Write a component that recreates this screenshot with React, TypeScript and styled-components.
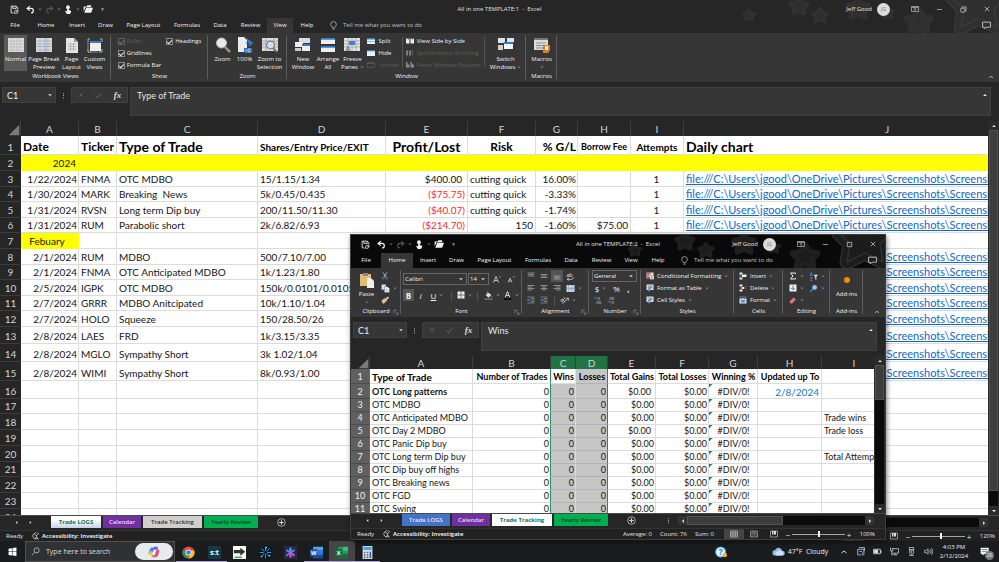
import React from "react";
import styled, { createGlobalStyle, css } from "styled-components";

const UI = `"Open Sans", "Noto Sans", sans-serif`;
const CELL = `Lato, "Open Sans", sans-serif`;

const GlobalStyle = createGlobalStyle`
  * { box-sizing: border-box; }
  body { margin: 0; background: #1b1c1e; font-family: ${UI}; overflow: hidden; }
  button, select, input, textarea { font: inherit; color: inherit; background: none; border: 0; padding: 0; margin: 0; border-radius: 0; }
  button { display: flex; align-items: center; justify-content: center; white-space: nowrap; }
  svg { display: block; flex: none; }
  a { color: #1268c4; }
`;

/* ---------- icons ---------- */

const ICONS: Record<string, React.ReactNode> = {
  save: <g fill="none" stroke="#e8e8e8" strokeWidth="1.6"><path d="M2 2h9l3 3v3M2 2v12h4M5 2v4h6V2" /><path d="M8 12a3 3 0 0 1 5-2l1-1v3h-3M14 13a3 3 0 0 1-5 1l-1 1v-2" /></g>,
  undo: <path d="M7 2 2 6l5 4M2 6h7a4 4 0 0 1 0 8" fill="none" stroke="#f0f0f0" strokeWidth="2.2" />,
  redo: <path d="m9 2 5 4-5 4M14 6H7a4 4 0 0 0 0 8" fill="none" stroke="#555" strokeWidth="1.8" />,
  touch: <g fill="#f0f0f0"><circle cx="7" cy="4" r="3.4" /><path d="M5.5 4h3v5l4 1v3l-2 3H5L2 11l1-1 2.5 1z" /></g>,
  folder: <g fill="#f2f2f2"><path d="M1 4h5l1-2h6v3H4L1 12z" /><path d="M5 6h11l-3 8H2z" /></g>,
  caret: <path d="M3 6h10l-5 5z" fill="#d0d0d0" />,
  chev: <path d="m3 6 5 4.5L13 6" fill="none" stroke="#d0d0d0" strokeWidth="2.2" />,
  qat: <path d="M4 3h8v2H4zM4 8h8l-4 4z" fill="#e0e0e0" />,
  bulb: <g fill="none" stroke="#c4c4c4" strokeWidth="1.3"><path d="M6 12c0-2-3-3-3-6a5 5 0 0 1 10 0c0 3-3 4-3 6zM6 14.5h4" /></g>,
  ribbonOpt: <g fill="none" stroke="#bdbdbd" strokeWidth="1.4"><path d="M1 3h14v10H1zM1 5h14M8 12V7M5.500 9 8 6.5 10.5 9" /></g>,
  min: <path d="M2 8h12" stroke="#cfcfcf" strokeWidth="1.5" />,
  max: <path d="M3 3h10v10H3z" fill="none" stroke="#e0e0e0" strokeWidth="1.5" />,
  restore: <path d="M2 5h9v9H2zM5 5V2h9v9h-3" fill="none" stroke="#ccc" strokeWidth="1.6" />,
  close: <path d="m2 2 12 12M14 2 2 14" stroke="#e6e6e6" strokeWidth="1.7" />,
  comment: <path d="M1 2h14v9H7l-3 3v-3H1z" fill="none" stroke="#d0d0d0" strokeWidth="1.5" />,
  collapse: <path d="m3 10 5-4 5 4" fill="none" stroke="#d8d8d8" strokeWidth="2" />,
  up: <path d="M3 10.5h10L8 5z" fill="#e6e6e6" />,
  down: <path d="M3 5.5h10L8 11z" fill="#e6e6e6" />,
  left: <path d="M10.5 3v10L5 8z" fill="#e6e6e6" />,
  right: <path d="M5.5 3v10L11 8z" fill="#e6e6e6" />,
  normal: <g><path d="M0 1h16v14H0z" fill="#dedede" /><path d="M0 4h16M0 7h16M0 10h16M0 13h16M3 1v14M6 1v14M9 1v14M12 1v14" stroke="#b2b2b2" strokeWidth=".6" /></g>,
  pageBreak: <g><path d="M0 1h16v14H0z" fill="#dcdcdc" /><path d="M0 4h16M0 7h16M4 1v14M8 1v14M12 1v14M0 13h16" stroke="#a0a6ad" strokeWidth=".6" /><path d="M0 9.500h16M10 1v14" stroke="#8fb4dc" strokeWidth="1" /></g>,
  pageLayout: <g><path d="M2 1h8l4 4v11H2z" fill="#e4e4e4" /><path d="M10 1v4h4" fill="#999" /><path d="M4 7h8M4 9.500h8M4 12h8M6.500 6v8M9.500 6v8" stroke="#a5a5a5" strokeWidth=".7" /></g>,
  custom: <g><path d="M1 2h2M1 2v3M13 2h2v3M1 12v3h3M15 12v3h-3" stroke="#aaa" fill="none" /><path d="M3 4h11v10H3z" fill="#eee" /><path d="M3 4h11v2H3z" fill="#2f7fd0" /><path d="M1 5v10h10" fill="none" stroke="#888" /></g>,
  zoom: <g><path d="m10 10 5 5" stroke="#9a9a9a" strokeWidth="2.4" /><circle cx="6.500" cy="6" r="5" fill="#e9e9e9" stroke="#b9b9b9" /></g>,
  hundred: <g><path d="M1 0h6l3 3v12H1z" fill="#ececec" /><path d="M10 3V1l4 4h-3z" fill="#2f7fd0" /><path d="M9 6h5M12 4l3 2-3 3" stroke="#2f7fd0" strokeWidth="1.5" fill="none" /><path d="M7 11h8v5H7z" fill="#2b6fba" /><path d="M9 12v3M11 12h2v3h-2z" stroke="#cfe2f5" strokeWidth=".7" fill="none" /></g>,
  zoomSel: <g><path d="M0 1h16v13H0z" fill="#dcdcdc" /><path d="M0 4h16M0 7h16M0 10h16M4 1v13M12 1v13" stroke="#999" strokeWidth=".7" /><path d="m11 11 4 4" stroke="#777" strokeWidth="2" /><circle cx="8.500" cy="8" r="4" fill="#cfdeed" stroke="#6d6d6d" /></g>,
  newWin: <g><path d="M4 1h11v5H4z" fill="#ddd" /><path d="M0 5h8v5H0z" fill="#f0f0f0" /><path d="M7 7h8v2H7z" fill="#2f7fd0" /><path d="M7 9h8v5H7z" fill="#f0f0f0" /><path d="M0 11h6v3H0z" fill="#ccc" /></g>,
  arrange: <g><path d="M1 1h14v6H1zM1 9h14v6H1z" fill="#efefef" /><path d="M1 1h14v1.800H1zM1 9h14v1.800H1z" fill="#2f7fd0" /></g>,
  freeze: <g><path d="M0 1h16v13H0z" fill="#e4e4e4" /><path d="M0 4h16M0 7h16M0 10h16M4 1v13M8 1v13M12 1v13" stroke="#9c9c9c" strokeWidth=".7" /><path d="M5 4h6v4H5z" fill="#3b82cf" /><path d="m1 14 3-6 3 6z" fill="#3a3a3a" opacity=".4" /></g>,
  split: <g><path d="M0 2h16v12H0z" fill="#efefef" /><path d="M0 2h16v3H0zM0 8h16v1H0z" fill="#2f7fd0" /></g>,
  hide: <g><path d="M0 2h16v12H0z" fill="#efefef" /><path d="M0 2h16v2.500H0z" fill="#2f7fd0" /></g>,
  unhide: <path d="M1 3h14v10H1zM1 5h14" fill="none" stroke="#5c5c5c" strokeWidth="1.5" />,
  side: <g fill="#ececec"><path d="M0 3h3l2 3V3h2v10H0zM9 3h3l2 3V3h2v10H9z" /></g>,
  sync: <g fill="#7d7d7d"><path d="M0 3h4v10H0zM6 3h4v10H6zM12 2h1v12h-1z" /></g>,
  reset: <g fill="#8a8a8a"><path d="M0 2h3v5h4v6H0zM9 2h3v5h4v6H9z" /></g>,
  switchWin: <g><path d="M0 1h7v5H0zM9 1h7v4H9z" fill="#e3e3e3" /><path d="M0 8h5v5H0z" fill="#d2d2d2" /><path d="M6 5h9v2H6z" fill="#2f7fd0" /><path d="M6 7h9v5H6z" fill="#f4f4f4" /></g>,
  macros: <g><path d="M0 1h14v12H0z" fill="#dcdcdc" /><path d="M0 1h14v2H0z" fill="#777" /><path d="M2 6h10M2 8.500h8M2 11h7" stroke="#8d8d8d" /><path d="M9 8h7v5l-2 3H9z" fill="#e07b28" /><path d="M11 9h3v4h-3z" fill="#f7efe6" /></g>,
  x: <path d="m3 3 10 10M13 3 3 13" stroke="#777" strokeWidth="1.5" />,
  check: <path d="m2 8 4 5 8-10" stroke="#777" strokeWidth="1.7" fill="none" />,
  dots: <path d="M7 2h2v2H7zM7 7h2v2H7zM7 12h2v2H7z" fill="#ccc" />,
  corner: <path d="M15 1v14H1z" fill="#7a7a7a" />,
  plus: <g fill="none" stroke="#d5d5d5" strokeWidth="1.3"><circle cx="8" cy="8" r="6.800" /><path d="M8 4v8M4 8h8" strokeWidth="2" /></g>,
  access: <g fill="none" stroke="#e6e6e6" strokeWidth="1.4"><path d="M9 2a6 6 0 1 0 3 10M5 5l4 2 4-3M9 7v3l4 5M9 10l-3 4M11 1l3 3" /></g>,
  launcher: <path d="M2 12V3h9M6 7l7 7M13 9v5H8" fill="none" stroke="#aaa" strokeWidth="1.3" />,
  paste: <g><path d="M1 2h11v12H1z" fill="#e3bd72" /><path d="M4 1h5v3H4z" fill="#888" /><path d="M8 6h4l3 3v7H8z" fill="#f0f0f0" /></g>,
  cut: <g fill="none" strokeWidth="1.4"><path d="m4 1 6 9M12 1 6 10" stroke="#ddd" /><circle cx="4.500" cy="12" r="2.200" stroke="#3c8ad8" /><circle cx="11.500" cy="12" r="2.200" stroke="#3c8ad8" /></g>,
  copy: <g><path d="M1 1h7l1 2v7H1z" fill="#ddd" /><path d="M6 5h6l3 3v7H6z" fill="#fff" stroke="#444" strokeWidth=".8" /><path d="M8 9h4M8 12h5" stroke="#2f7fd0" /></g>,
  brush: <g><path d="m9 5 5-4 2 3-5 4z" fill="#ddd" /><path d="m3 7 4-2 4 5-6 6-4-5z" fill="#e6bf7a" /><path d="m7 5 5 5" stroke="#fff" strokeWidth="1.5" /></g>,
  grow: <g><path d="m1 15 5-12 5 12M3 11h6" fill="none" stroke="#d6d6d6" strokeWidth="1.7" /><path d="M11 5h5l-2.500-4z" fill="#3c8ad8" /></g>,
  shrink: <g><path d="m2 15 4-9 4 9M3.500 12h5" fill="none" stroke="#d6d6d6" strokeWidth="1.5" /><path d="M11 2h5l-2.500 4z" fill="#3c8ad8" /></g>,
  borders: <g><path d="M1 1h14v14H1z" fill="#ededed" /><path d="M8 1v14M1 8h14" stroke="#4b4b4b" strokeWidth="1.4" /></g>,
  fill: <g><path d="m3 7 5-4 5 4-5 5z" fill="#e0e0e0" /><path d="M6 1v5" stroke="#ddd" /><path d="M13 8c2 2 2 4 1 4s-2-2-1-4" fill="#3c8ad8" /><path d="M1 13h14v3H1z" fill="#6a6a6a" /></g>,
  fontColor: <g><path d="m4 11 4-10 4 10M5.500 8h5" fill="none" stroke="#e0e0e0" strokeWidth="1.7" /><path d="M1 13h14v3H1z" fill="#0c0c0c" /></g>,
  alignTop: <path d="M1 2h14M3 5h10M1 8h14" stroke="#b0b0b0" strokeWidth="1.4" />,
  alignMid: <path d="M1 5h14M3 8h10M1 11h14" stroke="#b0b0b0" strokeWidth="1.4" />,
  alignBot: <path d="M1 8h14M3 11h10M1 14h14" stroke="#b0b0b0" strokeWidth="1.4" />,
  alignL: <path d="M1 3h14M1 6h9M1 9h14M1 12h9" stroke="#b0b0b0" strokeWidth="1.4" />,
  alignC: <path d="M1 3h14M4 6h8M1 9h14M4 12h8" stroke="#b0b0b0" strokeWidth="1.4" />,
  alignR: <path d="M1 3h14M6 6h9M1 9h14M6 12h9" stroke="#b0b0b0" strokeWidth="1.4" />,
  wrap: <g><text x="1" y="8" fontSize="9" fill="#eee" fontFamily="Open Sans">ab</text><path d="M2 13h8a3 3 0 0 0 3-4M5 11l-3 2 3 2" fill="none" stroke="#ddd" strokeWidth="1.3" /></g>,
  merge: <g><path d="M1 2h14v12H1z" fill="#e9e9e9" /><path d="M1 6h14v4H1z" fill="#7fb0e2" /><path d="M5 2v4M11 2v4M5 10v4M11 10v4" stroke="#777" /></g>,
  indentL: <g><path d="M1 2h14M8 5h7M8 8h7M8 11h7M1 14h14" stroke="#a8a8a8" strokeWidth="1.2" /><path d="M7 8H1M4 5 1 8l3 3" stroke="#3c8ad8" strokeWidth="1.8" fill="none" /></g>,
  indentR: <g><path d="M1 2h14M8 5h7M8 8h7M8 11h7M1 14h14" stroke="#a8a8a8" strokeWidth="1.2" /><path d="M0 8h7M4 5l3 3-3 3" stroke="#3c8ad8" strokeWidth="1.8" fill="none" /></g>,
  orient: <g stroke="#d6d6d6" strokeWidth="1.4" fill="none"><path d="M4 14 15 4M11 4h4v4" /><circle cx="3.500" cy="8" r="2" /><path d="m5 5 3 5M7 2l2 4" /></g>,
  decInc: <g fontSize="8" fill="#ddd" fontFamily="Open Sans"><text x="7" y="7">0</text><text x="3" y="15">.00</text><path d="M6 4H1M3 2 1 4l2 2" stroke="#3c8ad8" fill="none" strokeWidth="1.5" /></g>,
  decDec: <g fontSize="8" fill="#ddd" fontFamily="Open Sans"><text x="3" y="7">.00</text><text x="9" y="15">0</text><path d="M1 12h6M5 10l2 2-2 2" stroke="#3c8ad8" fill="none" strokeWidth="1.5" /></g>,
  cond: <g><path d="M1 1h14v13H1z" fill="#e3e3e3" /><path d="M1 1h8v4H1z" fill="#d9482f" /><path d="M1 6h5v3H1z" fill="#3c8ad8" /><path d="M1 10h7v4H1z" fill="#d9482f" /><path d="M8 7h8v8H8z" fill="#f4f4f4" stroke="#555" strokeWidth=".8" /><path d="M10 10h4M10 12.500h4" stroke="#444" /></g>,
  table: <g><path d="M1 1h14v11H1z" fill="#e9e9e9" /><path d="M1 4h14M1 8h14M5 1v11M10 1v11" stroke="#8b8b8b" /><path d="M6 5h9L7 15H4z" fill="#3c8ad8" opacity=".75" /><path d="m15 5-8 8" stroke="#eee" strokeWidth="1.5" /></g>,
  insert: <g><path d="M1 1h6v4H1zM1 11h6v4H1z" fill="#e6e6e6" /><path d="M6 5h9v5H6z" fill="#f2f2f2" /><path d="M6 7.500H1M3.500 5 1 7.500 3.500 10" stroke="#3c8ad8" strokeWidth="1.5" fill="none" /></g>,
  del: <g><path d="M1 1h6v4H1zM1 11h6v4H1zM5 6h5v4H5z" fill="#e6e6e6" /><path d="m10 4 5 6M15 4l-5 6" stroke="#d9482f" strokeWidth="1.5" /></g>,
  format: <g><path d="M1 1h14v2H1z" fill="#3c8ad8" /><path d="M1 5h14v10H1z" fill="#e9e9e9" /><path d="M5 5v10M11 5v10M1 9h14" stroke="#888" /><path d="M5 8h6v5H5z" fill="#3c8ad8" /></g>,
  sigma: <path d="M13 4V2H3l5 6-5 6h10v-2" fill="none" stroke="#ececec" strokeWidth="2" />,
  sortAz: <g><path d="m2 7 2-6 2 6" stroke="#4c8fe0" fill="none" strokeWidth="1.5" /><path d="M2 10h4l-4 5h4" stroke="#a05ac0" fill="none" strokeWidth="1.5" /><path d="M8 5h8l-3 4v5l-2-1V9z" fill="#ddd" /></g>,
  fillDown: <g><path d="M1 1h14v14H1z" fill="#eee" /><path d="M8 3v8M4.500 8 8 11.500 11.500 8" stroke="#2f7fd0" strokeWidth="2" fill="none" /></g>,
  find: <g><path d="m7 9-5 5" stroke="#3c8ad8" strokeWidth="2.4" /><circle cx="10" cy="6" r="4.300" fill="#9cc8f2" stroke="#3c8ad8" /></g>,
  eraser: <path d="m1 11 8-8 5 4-8 8H3z" fill="#e0738c" />,
  gridView: <path d="M1 2h14v12H1zM1 6h14M1 10h14M5.500 2v12M10.500 2v12" stroke="#c8c8c8" fill="none" strokeWidth="1.3" />,
  pageView: <path d="M1 2h14v12H1zM4 4h8v10M4 4v10M6 7h4M6 10h4" stroke="#bdbdbd" fill="none" strokeWidth="1.2" />,
  breakView: <g><path d="M1 2h14v12H1z" stroke="#c8c8c8" fill="none" strokeWidth="1.3" /><path d="M4 2h3v7H4zM8 2h4v7H8z" fill="#ddd" /></g>,
  windows: <path d="m1 3 6-1v6H1zM8 1.800 15 1v7H8zM1 9h6v6l-6-1zM8 9h7v7l-7-1z" fill="#fff" />,
  search: <g fill="none" stroke="#cfcfcf" strokeWidth="1.3"><circle cx="10" cy="6" r="4.500" /><path d="m6.500 9.500-5 5" /></g>,
  copilot: <g><path d="M5 2h5l-3 9H2C0 11 1 8 2 6s1-4 3-4" fill="#2d8fe0" /><path d="M8 1h3c3 0 2 3 2 4H8z" fill="#7a4ee0" /><path d="M1 7h5l-1 5c-4 0-5-2-4-5" fill="#f2c230" /><path d="M11 5h3c2 0 1 3 0 6s-2 4-4 4H6l3-3z" fill="#e0527c" /><path d="M5 12h4l-2 3c-2 0-3-1-2-3" fill="#f08a38" /><path d="M8 5h3l-3 6H5z" fill="#fff" /></g>,
  chrome: <g><circle cx="8" cy="8" r="7.500" fill="#dd4b3e" /><path d="M1.500 4.300 8 15.500A7.500 7.500 0 0 1 1.500 4.300" fill="#1fa05a" /><path d="M15 5.500A7.500 7.500 0 0 1 8 15.500l3.500-7V5.500z" fill="#fbc116" /><circle cx="8" cy="8" r="3.700" fill="#fff" /><circle cx="8" cy="8" r="2.800" fill="#3f7fe8" /></g>,
  st: <g><path d="M0 0h16v16H0z" fill="#173646" /><text x="8" y="11.500" textAnchor="middle" fontSize="9" fontWeight="700" fill="#fff" fontFamily="Open Sans">s:t</text></g>,
  arrowApp: <g><path d="M0 0h16v16H0z" fill="#f5f8f5" /><path d="M1 5h8V2l6 5-6 5V9H1z" fill="#333" /><path d="M2 13h9v2H2z" fill="#34b25c" /></g>,
  burst: <g><path d="M0 0h16v16H0z" fill="#071c2a" /><g stroke="#38a9df" strokeWidth="1.1"><path d="M8 1v5M8 10v5M1 8h5M10 8h5M3 3l3.500 3.500M9.500 9.500 13 13M13 3 9.500 6.500M6.500 9.500 3 13" /></g><circle cx="9" cy="2" r="1" fill="#9de" /><circle cx="3" cy="13" r="1" fill="#9de" /><circle cx="13" cy="12" r="1" fill="#9de" /></g>,
  asterisk: <g><path d="M0 0h16v16H0z" fill="#2b2745" /><g strokeWidth="2.5"><path d="M8 8V2" stroke="#3bb7e8" /><path d="m8 8 5-3" stroke="#7b6cf0" /><path d="m8 8 5 4" stroke="#b65be6" /><path d="M8 8v6" stroke="#e460c0" /><path d="m8 8-5 4" stroke="#8d62ef" /><path d="M8 8 3 5" stroke="#4d8df2" /></g></g>,
  word: <g><path d="M4 1h12v14H4z" fill="#2f78d4" /><path d="M4 1h12v4H4z" fill="#4ea5ee" /><path d="M4 11h12v4H4z" fill="#1b4a9c" /><path d="M0 4h9v9H0z" fill="#1c55ae" /><text x="4.500" y="11" textAnchor="middle" fontSize="7" fontWeight="700" fill="#fff" fontFamily="Open Sans">W</text></g>,
  excel: <g><path d="M4 1h12v14H4z" fill="#219a5b" /><path d="M10 1h6v5h-6z" fill="#34c481" /><path d="M4 10h12v5H4z" fill="#176a3c" /><path d="M0 4h9v9H0z" fill="#12703d" /><text x="4.500" y="11" textAnchor="middle" fontSize="7" fontWeight="700" fill="#fff" fontFamily="Open Sans">X</text></g>,
  calc: <g><path d="M2 0h12v16H2z" fill="#dfe5ea" /><path d="M3 1h10v4H3z" fill="#3fa8e6" /><path d="M3.500 7h2v2h-2zM7 7h2v2H7zM3.500 10h2v2h-2zM7 10h2v2H7zM3.500 13h2v2h-2zM7 13h2v2H7z" fill="#59666f" /><path d="M10.500 7h2v8h-2z" fill="#235f92" /></g>,
  help: <g><circle cx="7.500" cy="8" r="7.500" fill="#2a9bd8" /><circle cx="7.500" cy="8" r="6" fill="#e9f6fd" /><text x="7.500" y="12.500" textAnchor="middle" fontSize="12" fontWeight="700" fill="#1d7fbd" fontFamily="Open Sans">?</text><circle cx="13" cy="12" r="3" fill="#f5b52c" /></g>,
  cloud: <g><path d="M4 13a3.500 3.500 0 0 1 0-7 4.500 4.500 0 0 1 8.500 1A3 3 0 0 1 13 13z" fill="#8fb6ee" /><path d="M5 13a3 3 0 0 1 1-5 4 4 0 0 1 6.500 0A3 3 0 0 1 13 13z" fill="#cfe0fa" /></g>,
  meet: <g fill="none" stroke="#ddd" strokeWidth="1.3"><path d="M3 4h11v7M3 4v10h6M5 1h10v6M6 8h5" /><circle cx="12.500" cy="12.500" r="3" fill="#2f86e0" stroke="none" /></g>,
  battery: <g><path d="M1 4h12v8H1z" fill="none" stroke="#ddd" strokeWidth="1.4" /><path d="M13 6h2v4h-2zM2 5h7v6H2z" fill="#ddd" /></g>,
  monitor: <path d="M4 3h11v8H4M1 1v6h4V2M6 14h7M9 11v3M3 7v7h2" fill="none" stroke="#ddd" strokeWidth="1.3" />,
  usb: <g fill="none" stroke="#ddd" strokeWidth="1.3"><path d="M4 1h8v4H4zM4 15h8" /><circle cx="8" cy="9" r="4" /><path d="M8 7v4" /></g>,
  volume: <g fill="none" stroke="#ddd" strokeWidth="1.2"><path d="M1 6h3l3-3v10l-3-3H1z" /><path d="M9 6c1 1 1 3 0 4M11 4c2 2 2 6 0 8M13 2c3 3 3 9 0 12" /></g>,
  note: <g><path d="M1 1h13v10H7l-3 3v-3H1z" fill="#f0f0f0" /><path d="M3 4h9M3 7h9" stroke="#555" /></g>,
};

const Icon = ({ n, s = 8 }: { n: string; s?: number }) => (
  <svg viewBox="0 0 16 16" width={s} height={s} aria-hidden="true">{ICONS[n]}</svg>
);

const STAR = "M0-8 3-3 9-2 5 2 6 8 0 5-6 8-5 2-9-2-3-3Z";
const StarLayer = styled.svg`
  position: absolute; right: 0; top: 0; height: 33px; width: 260px; z-index: 0;
`;
const Stars = ({ fill, line }: { fill: string; line: string }) => (
  <StarLayer viewBox="0 0 260 33" aria-hidden="true">
    {[[10, 15, 0.6], [60, 6, 0.9], [81, 15, 0.75], [119, 8, 1.1], [149, 12, 0.6], [180, 21, 1.3], [240, 3, 3]].map(([x, y, k]) => (
      <g key={x} transform={`translate(${x} ${y}) scale(${k})`} strokeLinejoin="round">
        <path d={STAR} fill={line} stroke={line} strokeWidth="5" />
        <path d={STAR} fill={fill} stroke={fill} strokeWidth="4" />
        <path d={STAR} fill="none" stroke={line} strokeWidth=".6" />
      </g>
    ))}
  </StarLayer>
);

/* ---------- window chrome ---------- */

const Desktop = styled.div`
  position: relative; height: 100vh; display: flex; flex-direction: column;
  overflow: hidden; color: #f2f2f2; font-size: 6px; line-height: 9px;
`;
const MainWindow = styled.section`flex: 1; min-height: 0; display: flex; flex-direction: column; background: #262626;`;
const FloatWindow = styled.section`
  position: absolute; left: 351px; top: 235px; width: 534px; height: 304px;
  display: flex; flex-direction: column; background: #262626;
  box-shadow: 0 0 0 1px #3d3d3d, 1px 2px 5px 1px rgba(0, 0, 0, .5);
`;
const Head = styled.header<{ $bg: string }>`position: relative; background: ${p => p.$bg}; flex: none;`;
const TitleBar = styled.div`
  position: relative; z-index: 1; height: 18px; display: grid; grid-template-columns: 1fr auto 1fr; align-items: center;
`;
const QuickBar = styled.div`display: flex; align-items: center; padding-left: 10px; gap: 3px;`;
const QuickButton = styled.button<{ $gap?: number }>`margin-right: ${p => p.$gap || 0}px; height: 12px;`;
const Title = styled.h1`margin: 0; font-size: 6px; font-weight: 400; color: #e0e0e0; white-space: pre;`;
const Account = styled.div`display: flex; align-items: center; justify-content: flex-end; color: #e4e4e4;`;
const Avatar = styled.span`
  width: 13px; height: 13px; border-radius: 50%; background: #dcdcdc; color: #777; margin: 0 13px 0 5px;
  display: grid; place-items: center; font-size: 5px;
`;
const WinButton = styled.button`width: 24px; height: 14px;`;
const TabRow = styled.nav`position: relative; z-index: 1; display: flex; height: 15px; align-items: stretch;`;
const RibbonTabs = styled.div`display: grid; grid-template-columns: 30px 32px 30px 27px 49px 38px 28px 33px 26px 28px;`;
const RibbonTab = styled.button<{ $on?: boolean }>`background: ${p => (p.$on ? "#363636" : "transparent")};`;
const TellMe = styled.button`gap: 5px; margin-left: 8px; color: #c4c4c4;`;
const CommentButton = styled.button`margin-left: auto; width: 24px; margin-right: 1px;`;

const RibbonBar = styled.div`flex: none; display: flex; height: 49px; background: #363636;`;
const GroupBox = styled.div<{ $w: number }>`
  width: ${p => p.$w}px; flex: none; display: flex; flex-direction: column; padding: 2px 0 1px;
  background: linear-gradient(#5c5c5c, #5c5c5c) right 2px / 1px 44px no-repeat;
`;
const GroupBody = styled.div`flex: 1; display: flex; justify-content: center;`;
const GroupLabel = styled.div`
  height: 9px; text-align: center; white-space: nowrap; display: grid; align-items: center;
  grid-template-columns: minmax(0, 8px) 1fr minmax(0, 8px);
`;
const Group = ({ w, label, launcher, children }: { w: number; label: string; launcher?: boolean; children: React.ReactNode }) => (
  <GroupBox $w={w}>
    <GroupBody>{children}</GroupBody>
    <GroupLabel><i /><span>{label}</span>{launcher && <Icon n="launcher" s={6} />}</GroupLabel>
  </GroupBox>
);
const Big = styled.button<{ $w: number; $on?: boolean }>`
  width: ${p => p.$w}px; height: 36px; flex-direction: column; justify-content: flex-start; padding-top: 2px; gap: 2px;
  line-height: 8px; background: ${p => (p.$on ? "#5a5a5a" : "transparent")}; white-space: pre; text-align: center;
`;
const CollapseButton = styled.button`margin-left: auto; align-self: flex-end; width: 14px; height: 10px; margin-right: 1px;`;
const Stack = styled.div<{ $ml?: number }>`display: flex; flex-direction: column; align-items: flex-start; margin-left: ${p => p.$ml || 0}px;`;
const Small = styled.button<{ $off?: boolean }>`height: 12px; gap: 3px; color: ${p => (p.$off ? "#5e5e5e" : "inherit")};`;
const Divider = styled.i<{ $h?: number }>`width: 1px; height: ${p => p.$h || 30}px; background: #555; margin: 2px 3px 0;`;
const CheckLabel = styled.label<{ $off?: boolean }>`display: flex; align-items: center; height: 12px; gap: 2px; color: ${p => (p.$off ? "#5e5e5e" : "inherit")};`;
const CheckBox = styled.input`
  appearance: none; width: 7px; height: 7px; border: 1px solid #8b8b8b; display: grid; place-items: center;
  &:disabled { border-color: #606060; }
  &:checked::after { content: ""; width: 4px; height: 2px; border: solid #e6e6e6; border-width: 0 0 1px 1px; transform: rotate(-45deg); }
  &:disabled::after { opacity: .3; }
`;
const Check = ({ label, off }: { label: string; off?: boolean }) => (
  <CheckLabel $off={off}><CheckBox type="checkbox" defaultChecked disabled={off} />{label}</CheckLabel>
);

const FormulaRow = styled.div`flex: none; display: flex; align-items: flex-start; padding: 5px 8px 5px 2px; height: 39px; font-family: ${CELL}; font-size: 9px;`;
const SelectWrap = styled.span<{ $w: number; $h: number; $edge?: boolean }>`
  display: grid; align-items: center; width: ${p => p.$w}px; height: ${p => p.$h}px; background: #363636;
  border: 1px solid ${p => (p.$edge ? "#666" : "#404040")};
  > * { grid-area: 1 / 1; }
  > svg { justify-self: end; margin-right: 2px; pointer-events: none; }
`;
const Select = styled.select<{ $pad?: number }>`appearance: none; width: 100%; height: 100%; padding-left: ${p => p.$pad || 1}px; outline: 0;`;
const Combo = ({ w, h, value, label, edge, pad }: { w: number; h: number; value: string; label: string; edge?: boolean; pad?: number }) => (
  <SelectWrap $w={w} $h={h} $edge={edge}>
    <Select $pad={pad} aria-label={label} defaultValue={value}><option>{value}</option></Select>
    <Icon n="caret" s={6} />
  </SelectWrap>
);
const FxBar = styled.div`display: flex; background: #363636; width: 57px; height: 16px; justify-content: space-around; border: 1px solid #404040; margin-right: 2px;`;
const FxGlyph = styled.em`font-family: "Liberation Serif", serif; font-weight: 700; font-size: 9px; color: #dcdcdc;`;
const FormulaInput = styled.textarea`
  flex: 1; height: 29px; background: #363636; border: 1px solid #404040; resize: none; padding: 3px 6px; outline: 0; color: #e6e6e6;
  overflow: hidden;
`;
const ExpandButton = styled.button`width: 12px; height: 16px; margin-left: -12px;`;
const DotsCell = styled.span`width: 15px; height: 16px; display: grid; place-items: center;`;

function WindowHead({ title, active, dark, full }: { title: string; active: string; dark?: boolean; full?: boolean }) {
  const tabs = ["File", "Home", "Insert", "Draw", "Page Layout", "Formulas", "Data", "Review", "View", "Help"];
  return (
    <Head $bg={dark ? "#090909" : "#262626"}>
      <Stars fill={dark ? "#1c1c1c" : "#2f2f2f"} line={dark ? "#2d2d2d" : "#383838"} />
      <TitleBar>
        <QuickBar>
          <QuickButton $gap={4} aria-label="Save"><Icon n="save" s={9} /></QuickButton>
          <QuickButton aria-label="Undo"><Icon n="undo" s={9} /></QuickButton><Icon n="chev" s={4} />
          <QuickButton aria-label="Redo"><Icon n="redo" s={9} /></QuickButton><Icon n="chev" s={4} />
          <QuickButton aria-label="Touch mode"><Icon n="touch" s={9} /></QuickButton><Icon n="chev" s={4} />
          <QuickButton $gap={4} aria-label="Open"><Icon n="folder" s={10} /></QuickButton>
          <QuickButton aria-label="Customize toolbar"><Icon n="qat" s={5} /></QuickButton>
        </QuickBar>
        <Title>{title}</Title>
        <Account>
          <span>Jeff Good</span><Avatar>JG</Avatar>
          <WinButton aria-label="Ribbon display options"><Icon n="ribbonOpt" s={8} /></WinButton>
          <WinButton aria-label="Minimize"><Icon n="min" s={7} /></WinButton>
          <WinButton aria-label="Resize"><Icon n={full ? "restore" : "max"} s={7} /></WinButton>
          <WinButton aria-label="Close"><Icon n="close" s={6} /></WinButton>
        </Account>
      </TitleBar>
      <TabRow>
        <RibbonTabs>{tabs.map(t => <RibbonTab key={t} $on={t === active}>{t}</RibbonTab>)}</RibbonTabs>
        <TellMe><Icon n="bulb" s={9} />Tell me what you want to do</TellMe>
        <CommentButton aria-label="Comments"><Icon n="comment" s={9} /></CommentButton>
      </TabRow>
    </Head>
  );
}

function FormulaBar({ value }: { value: string }) {
  return (
    <FormulaRow>
      <Combo w={54} h={16} value="C1" label="Name box" pad={4} />
      <DotsCell><Icon n="dots" s={7} /></DotsCell>
      <FxBar>
        <button aria-label="Cancel"><Icon n="x" s={6} /></button>
        <button aria-label="Enter"><Icon n="check" s={7} /></button>
        <button aria-label="Insert function"><FxGlyph>fx</FxGlyph></button>
      </FxBar>
      <FormulaInput aria-label="Formula" defaultValue={value} />
      <ExpandButton aria-label="Expand formula bar"><Icon n="up" s={6} /></ExpandButton>
    </FormulaRow>
  );
}

/* ---------- sheets ---------- */

const SheetArea = styled.div`flex: 1; min-height: 0; display: flex; overflow: hidden;`;
const SheetClip = styled.div`flex: 1; min-width: 0; overflow: hidden; background: #fff;`;
const Sheet = styled.table<{ $size: number; $line: number; $over: number }>`
  width: calc(100% + ${p => p.$over}px); table-layout: fixed; border-collapse: separate; border-spacing: 0;
  font-family: ${CELL}; font-size: ${p => p.$size}px; line-height: ${p => p.$line}px; color: #151515;
`;
const HeadRow = styled.tr<{ $h: number }>`height: ${p => p.$h}px;`;
const ColHead = styled.th<{ $sel?: boolean }>`
  padding: 0; font-weight: 400; text-align: center; vertical-align: bottom; color: #d4d4d4; font-size: 10px;
  background: ${p => (p.$sel ? "#217346" : "#262626")}; border-right: 1px solid #3c3c3c;
  > svg { margin-left: auto; }
`;
const RowHead = styled.th<{ $sel?: boolean }>`
  padding: 0; font-weight: 400; text-align: center; vertical-align: bottom; color: ${p => (p.$sel ? "#f0f0f0" : "#d4d4d4")}; overflow: hidden;
  background: ${p => (p.$sel ? "#5f5f5f" : "#262626")}; border-bottom: 1px solid ${p => (p.$sel ? "#4c4c4c" : "#3c3c3c")};
  ${p => p.$sel && css`border-right: 1px solid #2b8a57;`}
`;
const Row = styled.tr<{ $h: number }>`height: ${p => p.$h}px;`;
type CellProps = { $align?: string; $bold?: boolean; $size?: number; $color?: string; $fill?: string; $pad?: number; $edge?: boolean; $flag?: boolean };
const Cell = styled.td<CellProps>`
  padding: 0 ${p => p.$pad ?? 2}px 0 ${p => (p.$align === "center" ? 1 : 2)}px; overflow: hidden; white-space: pre; vertical-align: bottom;
  text-align: ${p => p.$align || "left"}; font-weight: ${p => (p.$bold ? 700 : 400)};
  ${p => p.$size && css`font-size: ${p.$size}px;`}
  color: ${p => p.$color || "inherit"}; background: ${p => p.$fill || "#fff"};
  border-right: 1px solid ${p => (p.$edge ? "#2b8a57" : p.$fill === "#ff0" ? "#ff0" : "#dcdcdc")};
  border-bottom: 1px solid ${p => (p.$fill === "#ff0" ? "#ff0" : p.$fill ? "#b2b2b2" : "#dcdcdc")};
  ${p => p.$flag && css`background: linear-gradient(135deg, #1c8a3c 2px, transparent 3px) #fff;`}
`;
const VScroll = styled.div`
  flex: none; width: 11px; background: #2b2b2b; display: flex; flex-direction: column; align-items: stretch;
  > button { height: 9px; }
`;
const VTrack = styled.div`flex: 1; background: #0b0b0b; margin: 0 1px;`;
const VThumb = styled.div<{ $p: number }>`height: ${p => p.$p}%; background: #3d3d3d; border: 1px solid #525252;`;

const LINK = "file:///C:\\Users\\jgood\\OneDrive\\Pictures\\Screenshots\\Screenshot";
const RED = "#ff2a1f";
const LOG_WIDTHS = [21, 58, 38, 141, 128, 82, 68, 42, 53, 53];
const LOG_HEIGHTS = [19, 16, 16, 15, 16, 15, 16, 16, 15, 16, 15, 16, 17, 18, 19, 18, 15, 16, 16, 16, 15, 16, 16, 16];
const LOG_HEAD: [string, number, string][] = [
  ["Date", 12, "left"], ["Ticker", 12, "left"], ["Type of Trade", 14, "left"], ["Shares/Entry Price/EXIT", 10, "left"],
  ["Profit/Lost", 14, "center"], ["Risk", 12, "center"], ["% G/L", 12, "right"], ["Borrow Fee", 9, "center"], ["Attempts", 10, "center"], ["Daily chart", 14, "left"],
];
const LOGS: Record<number, string[]> = {
  3: ["1/22/2024", "FNMA", "OTC MDBO", "15/1.15/1.34", "$400.00", "cutting quick", "16.00%", "", "1"],
  4: ["1/30/2024", "MARK", "Breaking  News", "5k/0.45/0.435", "($75.75)", "cutting quick", "-3.33%", "", "1"],
  5: ["1/31/2024", "RVSN", "Long term Dip buy", "200/11.50/11.30", "($40.07)", "cutting quick", "-1.74%", "", "1"],
  6: ["1/31/2024", "RUM", "Parabolic short", "2k/6.82/6.93", "($214.70)", "150", "-1.60%", "$75.00", "1"],
  8: ["2/1/2024", "RUM", "MDBO", "500/7.10/7.00"],
  9: ["2/1/2024", "FNMA", "OTC Anticipated MDBO", "1k/1.23/1.80"],
  10: ["2/5/2024", "IGPK", "OTC MDBO", "150k/0.0101/0.0105"],
  11: ["2/7/2024", "GRRR", "MDBO Anitcipated", "10k/1.10/1.04"],
  12: ["2/7/2024", "HOLO", "Squeeze", "150/28.50/26"],
  13: ["2/8/2024", "LAES", "FRD", "1k/3.15/3.35"],
  14: ["2/8/2024", "MGLO", "Sympathy Short", "3k 1.02/1.04"],
  15: ["2/8/2024", "WIMI", "Sympathy Short", "8k/0.93/1.00"],
};
const LOG_ALIGN = ["right", "left", "left", "left", "right", "left", "right", "right", "center"];

function LogSheet() {
  return (
    <Sheet $size={10} $line={14} $over={103}>
      <colgroup>{LOG_WIDTHS.map((w, i) => <col key={i} width={w} />)}<col /></colgroup>
      <thead><HeadRow $h={15}>
        <ColHead aria-label="Select all"><Icon n="corner" s={12} /></ColHead>
        {"ABCDEFGHIJ".split("").map(c => <ColHead key={c}>{c}</ColHead>)}
      </HeadRow></thead>
      <tbody>
        {LOG_HEIGHTS.map((h, i) => {
          const n = i + 1;
          const data = LOGS[n] || [];
          return (
            <Row key={n} $h={h}>
              <RowHead>{n}</RowHead>
              {n === 1 && LOG_HEAD.map(([t, s, a]) => <Cell key={t} $bold $size={s} $align={a} $color="#000" $pad={1}>{t}</Cell>)}
              {n === 2 && LOG_HEAD.map(([t], c) => <Cell key={t} $fill="#ff0" $align="right">{c === 0 ? "2024" : ""}</Cell>)}
              {n === 7 && <><Cell $fill="#ff0" $align="center" $pad={6}>Febuary</Cell>{LOG_HEAD.slice(1).map(([t]) => <Cell key={t} />)}</>}
              {n > 2 && n !== 7 && LOG_ALIGN.map((a, c) => {
                const v = data[c] || "";
                return (
                  <Cell key={c} $align={v === "150" ? "right" : a} $color={v.startsWith("($") ? RED : undefined} $pad={v === "$400.00" ? 5 : c === 6 || c === 0 ? 1 : 2}>{v}</Cell>
                );
              })}
              {n > 2 && n !== 7 && <Cell $size={11}>{n < 16 && <a href="#chart">{LINK}</a>}</Cell>}
            </Row>
          );
        })}
      </tbody>
    </Sheet>
  );
}

const TRACK_WIDTHS = [19, 103, 78, 25, 32, 48, 53, 49, 64];
const TRACK_HEAD = ["Type of Trade", "Number of Trades", "Wins", "Losses", "Total Gains", "Total Losses", "Winning %", "Updated up To", ""];
const TRACK_NAMES = ["OTC Long patterns", "OTC MDBO", "OTC Anticipated MDBO", "OTC Day 2 MDBO", "OTC Panic Dip buy", "OTC Long term Dip buy", "OTC Dip buy off highs", "OTC Breaking news", "OTC FGD", "OTC Swing"];
const TRACK_NOTES: Record<number, string> = { 4: "Trade wins", 5: "Trade loss", 7: "Total Attempts" };

function TrackSheet() {
  return (
    <Sheet $size={9} $line={12} $over={13}>
      <colgroup>{TRACK_WIDTHS.map((w, i) => <col key={i} width={w} />)}<col /></colgroup>
      <thead><HeadRow $h={13}>
        <ColHead aria-label="Select all"><Icon n="corner" s={11} /></ColHead>
        {"ABCDEFGHI".split("").map(c => <ColHead key={c} $sel={c === "C" || c === "D"}>{c}</ColHead>)}
      </HeadRow></thead>
      <tbody>
        <Row $h={15}>
          <RowHead $sel>1</RowHead>
          {TRACK_HEAD.map((t, i) => (
            <Cell key={i} $bold $size={i === 0 ? 10 : 9} $align={i ? "center" : "left"} $pad={i ? 0 : 1} $fill={i === 3 ? "#c6c6c6" : undefined} $edge={i === 1 || i === 3} $color="#000">{t}</Cell>
          ))}
        </Row>
        {TRACK_NAMES.map((name, i) => {
          const n = i + 2;
          return (
            <Row key={name} $h={i ? 13 : 15}>
              <RowHead $sel>{n}</RowHead>
              <Cell $bold={i === 0}>{name}</Cell>
              <Cell $align="right" $edge $pad={1}>0</Cell>
              <Cell $align="right" $fill="#c6c6c6" $pad={1}>0</Cell>
              <Cell $align="right" $fill="#c6c6c6" $edge $pad={1}>0</Cell>
              <Cell $align="right" $pad={n === 2 || n === 5 ? 4 : 1}>$0.00</Cell>
              <Cell $align="right" $pad={1}>$0.00</Cell>
              <Cell $align="center" $flag $pad={0}>#DIV/0!</Cell>
              <Cell $align="right" $color="#1b76c8" $size={10}>{n === 2 ? "2/8/2024" : ""}</Cell>
              <Cell>{TRACK_NOTES[n] || ""}</Cell>
            </Row>
          );
        })}
      </tbody>
    </Sheet>
  );
}

const Scroller = ({ p }: { p: number }) => (
  <VScroll>
    <button aria-label="Scroll up"><Icon n="up" s={6} /></button>
    <VTrack><VThumb $p={p} /></VTrack>
    <button aria-label="Scroll down"><Icon n="down" s={6} /></button>
  </VScroll>
);

const TabBar = styled.div`flex: none; height: 15px; display: flex; align-items: flex-start; background: #262626; border-top: 1px solid #4a4a4a; padding: 0 11px 0 9px;`;
const TabNav = styled.button`width: 14px; height: 13px;`;
const SheetTabs = styled.div`display: flex; gap: 2px; margin: 0 16px 0 14px;`;
const SheetTab = styled.button<{ $bg: string; $fg: string; $w: number; $on?: boolean }>`
  width: ${p => p.$w}px; height: 12px; background: ${p => p.$bg}; color: ${p => p.$fg}; font-size: 6px; font-weight: ${p => (p.$on ? 700 : 600)};
`;
const HScroll = styled.div<{ $w: number }>`display: flex; margin-left: auto; width: ${p => p.$w}px; height: 9px; margin-top: 2px; background: #0b0b0b; > button { width: 9px; background: #333; }`;
const HThumb = styled.div`flex: 0 0 49%; background: #3d3d3d; border: 1px solid #525252; margin-right: auto;`;
const TabDots = styled.span`margin: 3px 0 0 auto; & + div { margin-left: 6px; }`;

type SheetTabDef = [string, number, string, string];
function SheetTabBar({ tabs, active, scrollWidth, dots }: { tabs: SheetTabDef[]; active: string; scrollWidth: number; dots?: boolean }) {
  return (
    <TabBar>
      <TabNav aria-label="Previous sheet"><Icon n="left" s={5} /></TabNav>
      <TabNav aria-label="Next sheet"><Icon n="right" s={5} /></TabNav>
      <SheetTabs>{tabs.map(([t, w, bg, fg]) => <SheetTab key={t} $w={w} $bg={bg} $fg={fg} $on={t === active}>{t}</SheetTab>)}</SheetTabs>
      <TabNav aria-label="New sheet"><Icon n="plus" s={9} /></TabNav>
      {dots && <TabDots><Icon n="dots" s={7} /></TabDots>}
      <HScroll $w={scrollWidth}>
        <button aria-label="Scroll left"><Icon n="left" s={6} /></button>
        <HThumb />
        <button aria-label="Scroll right"><Icon n="right" s={6} /></button>
      </HScroll>
    </TabBar>
  );
}

const StatusBar = styled.footer<{ $end: number }>`flex: none; height: 11px; display: flex; align-items: center; background: #222; padding: 0 ${p => p.$end}px 0 6px; border-top: 1px solid #333; color: #e4e4e4;`;
const AccessButton = styled.button`gap: 2px; font-weight: 600; color: #fff; margin-left: 9px;`;
const Counts = styled.span`margin-left: auto; display: flex; gap: 8px; margin-right: 10px;`;
const ViewButton = styled.button<{ $on?: boolean }>`width: 20px; height: 10px; background: ${p => (p.$on ? "#454545" : "transparent")};`;
const ZoomButton = styled.button`width: 8px; height: 10px; font-size: 8px;`;
const ZoomSlider = styled.input`
  appearance: none; width: 53px; height: 8px; background: linear-gradient(#a5a5a5, #a5a5a5) center / 100% 1px no-repeat;
  &::-webkit-slider-thumb { appearance: none; width: 2px; height: 6px; background: #f4f4f4; }
`;
const ZoomText = styled.span`width: 22px; text-align: right;`;

function Status({ zoom, pos, counts }: { zoom: string; pos: number; counts?: boolean }) {
  return (
    <StatusBar $end={counts ? 10 : 4}>
      <span>Ready</span>
      <AccessButton><Icon n="access" s={8} />Accessibility: Investigate</AccessButton>
      <Counts>{counts && <><span>Average: 0</span><span>Count: 76</span><span>Sum: 0</span></>}</Counts>
      <ViewButton $on aria-label="Normal view"><Icon n="gridView" s={8} /></ViewButton>
      <ViewButton aria-label="Page layout view"><Icon n="pageView" s={8} /></ViewButton>
      <ViewButton aria-label="Page break view"><Icon n="breakView" s={8} /></ViewButton>
      <ZoomButton aria-label="Zoom out">−</ZoomButton>
      <ZoomSlider type="range" aria-label="Zoom" defaultValue={pos} />
      <ZoomButton aria-label="Zoom in">+</ZoomButton>
      <ZoomText>{zoom}</ZoomText>
    </StatusBar>
  );
}

/* ---------- ribbons ---------- */

const BigButton = ({ icon, w, on, children, s = 16 }: { icon: string; w: number; on?: boolean; s?: number; children: React.ReactNode }) => (
  <Big $w={w} $on={on}><Icon n={icon} s={s} /><span>{children}</span></Big>
);
const Inline = styled.span`display: inline-flex; align-items: center; gap: 2px;`;

function ViewRibbon() {
  return (
    <RibbonBar>
      <Group w={111} label="Workbook Views">
        <BigButton icon="normal" w={23} on>Normal</BigButton>
        <BigButton icon="pageBreak" w={34}>{"Page Break\nPreview"}</BigButton>
        <BigButton icon="pageLayout" w={21}>{"Page\nLayout"}</BigButton>
        <BigButton icon="custom" w={25}>{"Custom\nViews"}</BigButton>
      </Group>
      <Group w={97} label="Show">
        <Stack><Check label="Ruler" off /><Check label="Gridlines" /><Check label="Formula Bar" /></Stack>
        <Stack $ml={5}><Check label="Headings" /></Stack>
      </Group>
      <Group w={79} label="Zoom">
        <BigButton icon="zoom" w={24}>Zoom</BigButton>
        <BigButton icon="hundred" w={20}>100%</BigButton>
        <BigButton icon="zoomSel" w={30}>{"Zoom to\nSelection"}</BigButton>
      </Group>
      <Group w={239} label="Window">
        <BigButton icon="newWin" w={27}>{"New\nWindow"}</BigButton>
        <BigButton icon="arrange" w={23}>{"Arrange\nAll"}</BigButton>
        <BigButton icon="freeze" w={26}>{"Freeze\n"}<Inline>Panes<Icon n="chev" s={4} /></Inline></BigButton>
        <Stack $ml={2}>
          <Small><Icon n="split" s={8} />Split</Small>
          <Small><Icon n="hide" s={8} />Hide</Small>
          <Small $off><Icon n="unhide" s={8} />Unhide</Small>
        </Stack>
        <Divider />
        <Stack>
          <Small><Icon n="side" s={8} />View Side by Side</Small>
          <Small $off><Icon n="sync" s={8} />Synchronous Scrolling</Small>
          <Small $off><Icon n="reset" s={8} />Reset Window Position</Small>
        </Stack>
        <Divider />
        <BigButton icon="switchWin" w={36}>{"Switch\n"}<Inline>Windows<Icon n="chev" s={4} /></Inline></BigButton>
      </Group>
      <Group w={31} label="Macros">
        <BigButton icon="macros" w={28}>{"Macros\n"}<Inline><Icon n="chev" s={4} /></Inline></BigButton>
      </Group>
      <CollapseButton aria-label="Collapse ribbon"><Icon n="collapse" s={6} /></CollapseButton>
    </RibbonBar>
  );
}

const Tools = styled.div`display: flex; flex-direction: column; flex: 1; padding: 0 3px;`;
const ToolRow = styled.div<{ $h?: number }>`display: flex; align-items: center; height: ${p => p.$h || 12}px; gap: 1px;`;
const Tool = styled.button<{ $w: number; $on?: boolean }>`
  width: ${p => p.$w}px; height: 12px; background: ${p => (p.$on ? "#555" : "transparent")}; font-size: 8px; gap: 3px;
`;

function HomeRibbon() {
  return (
    <RibbonBar>
      <Group w={50} label="Clipboard" launcher>
        <BigButton icon="paste" w={24}>{"Paste\n"}<Inline><Icon n="chev" s={4} /></Inline></BigButton>
        <Stack $ml={1}>
          <Tool $w={10} aria-label="Cut"><Icon n="cut" s={8} /></Tool>
          <Tool $w={18} aria-label="Copy"><Icon n="copy" s={9} /><Icon n="chev" s={4} /></Tool>
          <Tool $w={10} aria-label="Format painter"><Icon n="brush" s={8} /></Tool>
        </Stack>
      </Group>
      <Group w={121} label="Font" launcher>
        <Tools>
          <ToolRow $h={18}>
            <Combo w={64} h={12} value="Calibri" label="Font" edge pad={1} />
            <Combo w={21} h={12} value="14" label="Font size" edge />
            <Tool $w={14} aria-label="Grow font"><Icon n="grow" s={8} /></Tool><Tool $w={12} aria-label="Shrink font"><Icon n="shrink" s={8} /></Tool>
          </ToolRow>
          <ToolRow $h={14}>
            <Tool $w={11} $on><b>B</b></Tool><Tool $w={11}><i>I</i></Tool><Tool $w={20}><u>U</u><Icon n="chev" s={4} /></Tool>
            <Divider $h={9} /><Tool $w={17} aria-label="Borders"><Icon n="borders" s={8} /><Icon n="chev" s={4} /></Tool>
            <Divider $h={9} /><Tool $w={19} aria-label="Fill color"><Icon n="fill" s={9} /><Icon n="chev" s={4} /></Tool>
            <Tool $w={18} aria-label="Font color"><Icon n="fontColor" s={9} /><Icon n="chev" s={4} /></Tool>
          </ToolRow>
        </Tools>
      </Group>
      <Group w={67} label="Alignment" launcher>
        <Tools>
          <ToolRow><Tool $w={12} aria-label="Top"><Icon n="alignTop" /></Tool><Tool $w={12} aria-label="Middle"><Icon n="alignMid" /></Tool><Tool $w={12} $on aria-label="Bottom"><Icon n="alignBot" /></Tool><Tool $w={12} aria-label="Wrap text"><Icon n="wrap" s={9} /></Tool></ToolRow>
          <ToolRow><Tool $w={12} aria-label="Left"><Icon n="alignL" /></Tool><Tool $w={12} aria-label="Center"><Icon n="alignC" /></Tool><Tool $w={12} aria-label="Right"><Icon n="alignR" /></Tool><Tool $w={20} aria-label="Merge"><Icon n="merge" s={9} /><Icon n="chev" s={4} /></Tool></ToolRow>
          <ToolRow><Tool $w={12} aria-label="Decrease indent"><Icon n="indentL" /></Tool><Tool $w={12} aria-label="Increase indent"><Icon n="indentR" /></Tool><Divider $h={9} /><Tool $w={18} aria-label="Orientation"><Icon n="orient" s={9} /><Icon n="chev" s={4} /></Tool></ToolRow>
        </Tools>
      </Group>
      <Group w={52} label="Number" launcher>
        <Tools>
          <ToolRow><Combo w={45} h={12} value="General" label="Number format" edge pad={1} /></ToolRow>
          <ToolRow><Tool $w={17}>$<Icon n="chev" s={4} /></Tool><Tool $w={13}>%</Tool><Tool $w={9}><b>,</b></Tool></ToolRow>
          <ToolRow><Tool $w={12} aria-label="Increase decimal"><Icon n="decInc" /></Tool><Tool $w={12} aria-label="Decrease decimal"><Icon n="decDec" /></Tool></ToolRow>
        </Tools>
      </Group>
      <Group w={93} label="Styles">
        <Tools>
          <Stack $ml={2}>
            <Small><Icon n="cond" />Conditional Formatting<Icon n="chev" s={4} /></Small>
            <Small><Icon n="table" />Format as Table<Icon n="chev" s={4} /></Small>
            <Small><Icon n="table" />Cell Styles<Icon n="chev" s={4} /></Small>
          </Stack>
        </Tools>
      </Group>
      <Group w={49} label="Cells">
        <Tools>
          <Stack $ml={2}>
            <Small><Icon n="insert" />Insert<Icon n="chev" s={4} /></Small>
            <Small><Icon n="del" />Delete<Icon n="chev" s={4} /></Small>
            <Small><Icon n="format" />Format<Icon n="chev" s={4} /></Small>
          </Stack>
        </Tools>
      </Group>
      <Group w={47} label="Editing">
        <Tools>
          <ToolRow><Tool $w={20} aria-label="Sum"><Icon n="sigma" /><Icon n="chev" s={4} /></Tool><Tool $w={20} aria-label="Sort"><Icon n="sortAz" s={9} /><Icon n="chev" s={4} /></Tool></ToolRow>
          <ToolRow><Tool $w={20} aria-label="Fill"><Icon n="fillDown" /><Icon n="chev" s={4} /></Tool><Tool $w={20} aria-label="Find"><Icon n="find" s={9} /><Icon n="chev" s={4} /></Tool></ToolRow>
          <ToolRow><Tool $w={20} aria-label="Clear"><Icon n="eraser" /><Icon n="chev" s={4} /></Tool></ToolRow>
        </Tools>
      </Group>
      <Group w={33} label="Add-ins">
        <Big $w={30}><svg width="16" height="16" aria-hidden="true"><circle cx="8" cy="8" r="3" fill="#f08c0a" /></svg><span>Add-ins</span></Big>
      </Group>
      <CollapseButton aria-label="Collapse ribbon"><Icon n="collapse" s={6} /></CollapseButton>
    </RibbonBar>
  );
}

/* ---------- taskbar ---------- */

const TaskBar = styled.footer`flex: none; height: 21px; background: #1b1c1e; display: flex; align-items: stretch; color: #ededed; font-size: 7px;`;
const StartButton = styled.button`width: 25px;`;
const SearchBox = styled.label`
  width: 150px; display: flex; align-items: center; gap: 6px; background: #303132; border: 1px solid #505050; padding: 0 1px 0 5px;
`;
const SearchInput = styled.input`flex: 1; min-width: 0; font-size: 7px; outline: 0; &::placeholder { color: #dcdcdc; opacity: 1; }`;
const Pill = styled.span`width: 38px; height: 17px; border-radius: 9px; background: #e8ebee; display: grid; place-items: center;`;
const Apps = styled.div`display: flex; width: 204px; margin-left: 1px;`;
const AppButton = styled.button<{ $run?: boolean; $on?: boolean }>`
  flex: 1; background: ${p => (p.$on ? "#454545" : "transparent")};
  border-top: 1px solid transparent; box-shadow: inset 0 -1px 0 ${p => (p.$run ? "#a9a0dd" : "transparent")};
`;
const Tray = styled.div`margin-left: auto; display: flex; align-items: center;`;
const TrayButton = styled.button<{ $w?: number }>`width: ${p => p.$w || 17}px; height: 20px; gap: 3px;`;
const Clock = styled.time`text-align: center; line-height: 9px; font-size: 6px; width: 34px;`;
const Notice = styled.button`position: relative; width: 28px; height: 20px;`;
const Badge = styled.span`
  position: absolute; left: 14px; top: 9px; width: 9px; height: 9px; border-radius: 50%; background: #77797b; font-size: 5px; display: grid; place-items: center;
`;

const APPS: [string, string, boolean][] = [
  ["chrome", "Chrome", true], ["st", "Stock tool", true], ["arrowApp", "Transfer", false], ["burst", "Burst", false],
  ["asterisk", "Asterisk", false], ["word", "Word", true], ["excel", "Excel", true], ["calc", "Calculator", true],
];

function Taskbar() {
  return (
    <TaskBar>
      <StartButton aria-label="Start"><Icon n="windows" s={9} /></StartButton>
      <SearchBox><Icon n="search" s={9} /><SearchInput aria-label="Search" placeholder="Type here to search" /><Pill><Icon n="copilot" s={12} /></Pill></SearchBox>
      <Apps>{APPS.map(([i, l, r]) => <AppButton key={i} $run={r} $on={i === "excel"} aria-label={l}><Icon n={i} s={13} /></AppButton>)}</Apps>
      <Tray>
        <TrayButton $w={88} aria-label="Help"><Icon n="help" s={12} /></TrayButton>
        <TrayButton $w={70}><Icon n="cloud" s={13} />47°F&nbsp; Cloudy</TrayButton>
        <TrayButton aria-label="More"><Icon n="collapse" s={8} /></TrayButton>
        <TrayButton aria-label="Meet now"><Icon n="meet" s={9} /></TrayButton>
        <TrayButton aria-label="Battery"><Icon n="battery" s={9} /></TrayButton>
        <TrayButton aria-label="Display"><Icon n="monitor" s={9} /></TrayButton>
        <TrayButton aria-label="Device"><Icon n="usb" s={9} /></TrayButton>
        <TrayButton aria-label="Volume"><Icon n="volume" s={9} /></TrayButton>
        <Clock>4:03 PM<br />2/12/2024</Clock>
        <Notice aria-label="Notifications"><Icon n="note" s={10} /><Badge>26</Badge></Notice>
      </Tray>
    </TaskBar>
  );
}

const ACTIVE_TAB = "linear-gradient(#fff 30%, #c3d3ea)";
const MAIN_TABS: SheetTabDef[] = [
  ["Trade LOGS", 50, ACTIVE_TAB, "#217346"], ["Calendar", 38, "#7030a0", "#ead9f5"], ["Trade Tracking", 59, "#d0cece", "#333"], ["Yearly Review", 54, "#00b050", "#0c3d20"],
];
const FLOAT_TABS: SheetTabDef[] = [
  ["Trade LOGS", 48, "#4472c4", "#e6edf8"], ["Calendar", 38, "#7030a0", "#ead9f5"], ["Trade Tracking", 60, "#fff", "#217346"], ["Yearly Review", 54, "#00b050", "#0c3d20"],
];

export default function App() {
  return (
    <>
      <GlobalStyle />
      <Desktop>
        <MainWindow>
          <WindowHead title="All in one TEMPLATE:1  -  Excel" active="View" full />
          <ViewRibbon />
          <FormulaBar value="Type of Trade" />
          <SheetArea><SheetClip><LogSheet /></SheetClip><Scroller p={96} /></SheetArea>
          <SheetTabBar tabs={MAIN_TABS} active="Trade LOGS" scrollWidth={300} />
          <Status zoom="120%" pos={55} />
        </MainWindow>
        <Taskbar />
        <FloatWindow>
          <WindowHead title="All in one TEMPLATE:2  -  Excel" active="Home" dark />
          <HomeRibbon />
          <FormulaBar value="Wins" />
          <SheetArea><SheetClip><TrackSheet /></SheetClip><Scroller p={25} /></SheetArea>
          <SheetTabBar tabs={FLOAT_TABS} active="Trade Tracking" scrollWidth={196} dots />
          <Status zoom="100%" pos={50} counts />
        </FloatWindow>
      </Desktop>
    </>
  );
}
